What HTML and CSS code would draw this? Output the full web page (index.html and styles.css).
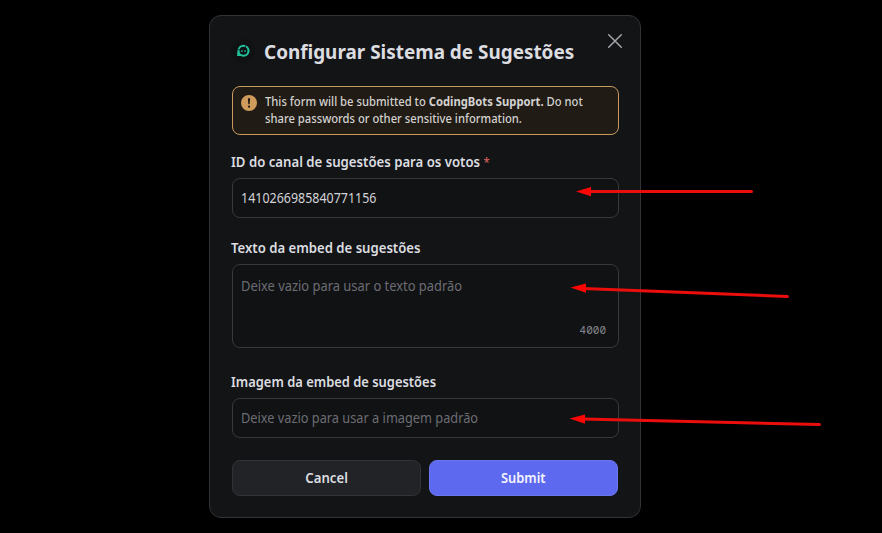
FILE: index.html
```html
<!DOCTYPE html>
<html lang="pt-BR">
<head>
<meta charset="utf-8">
<title>Configurar Sistema de Sugestões</title>
<link rel="stylesheet" href="styles.css">
</head>
<body>
<main class="modal">
  <header class="header">
    <svg class="logo" viewBox="0 0 24 24" width="24" height="24">
      <circle cx="12" cy="12" r="12" fill="#101113"/>
      <circle cx="12.500" cy="11.800" r="5" fill="none" stroke="#1fc39c" stroke-width="2.100"/>
      <path d="M6.200 17.100V12.500l4 4.600z" fill="#1fc39c"/>
      <path d="M15 5.800 14.400 8.500M6.800 10.200 8.800 10.900" stroke="#101113" stroke-width=".8"/>
      <path d="M10.900 11.300v1.800M14.100 11.300v1.800" stroke="#1fc39c" stroke-width="1.300"/>
    </svg>
    <h1 class="title"><span>Configurar Sistema de Sugestões</span></h1>
    <svg class="close" viewBox="0 0 16 16" width="16" height="16"><path d="M1.7 1.7 14.3 14.3M14.3 1.7 1.7 14.3" stroke="#a3a4aa" stroke-width="1.5" stroke-linecap="round"/></svg>
  </header>
  <section class="notice">
    <svg class="warn" viewBox="0 0 16 16" width="16" height="16"><circle cx="8" cy="8" r="8" fill="#cf9c5c"/><path d="M6.9 3.3h2.2L8.7 9.3H7.3z" fill="#201b14"/><circle cx="8" cy="11.7" r="1.1" fill="#201b14"/></svg>
    <p class="notice-text"><span class="n1">This form will be submitted to <b>CodingBots Support.</b> Do not</span><br><span class="n2">share passwords or other sensitive information.</span></p>
  </section>
  <div class="field">
    <div class="label"><span class="l1">ID do canal de sugestões para os votos <span class="required">*</span></span></div>
    <div class="input value"><span class="v1">1410266985840771156</span></div>
  </div>
  <div class="field">
    <div class="label"><span class="l2">Texto da embed de sugestões</span></div>
    <div class="input area"><span class="p1">Deixe vazio para usar o texto padrão</span><span class="count">4000</span></div>
  </div>
  <div class="field">
    <div class="label"><span class="l3">Imagem da embed de sugestões</span></div>
    <div class="input"><span class="p2">Deixe vazio para usar a imagem padrão</span></div>
  </div>
  <footer class="actions">
    <button class="button"><span>Cancel</span></button>
    <button class="button primary"><span>Submit</span></button>
  </footer>
</main>
<svg class="arrows" viewBox="0 0 882 533" width="882" height="533">
  <g stroke="#ec0e0c" stroke-width="3" stroke-linecap="round">
    <path d="M588 191.5H751.5"/><path d="M583 288.5 787.5 296.5"/><path d="M583 419 819.5 424.5"/>
  </g>
  <g fill="#fb0505"><path d="M576 191.5 591 187v9.200z"/><path d="M570.500 287.500 586 283.500v9.300z"/><path d="M569.500 418.500 585 414.500v9.300z"/></g>
</svg>
</body>
</html>
```
FILE: styles.css
```css
* { box-sizing: border-box; }
body {
  margin: 0;
  height: 533px;
  overflow: hidden;
  background: #000;
  padding: 15px 0 0 209px;
  font-family: "Noto Sans", sans-serif;
  color: #dcdde0;
}
.modal {
  width: 432px;
  height: 503px;
  padding: 22px 21px 0 22px;
  border: 1px solid #323337;
  border-radius: 12px;
  background: #131416;
}
.header { display: flex; height: 48px; }
.logo { margin-top: 1px; margin-left: -1px; flex: none; }
.title {
  flex: none;
  margin: 0 0 0 9px;
  width: 336px;
  font-size: 20px;
  line-height: 27px;
  font-weight: 700;
  white-space: nowrap;
}
.close { margin: -5px 0 0 7px; flex: none; }

/* condensed text runs */
.title span, .n1, .n2, .l1, .l2, .l3, .v1, .p1, .p2, .button span {
  display: inline-block;
  transform-origin: left center;
}
.title span { transform: scaleX(.945); }
.n1 { transform: scaleX(.937); }
.n2 { transform: scaleX(.936); }
.l1 { transform: scaleX(.941); }
.l2 { transform: scaleX(.938); }
.l3 { transform: scaleX(.923); }
.v1 { transform: scaleX(.89); }
.p1 { transform: scaleX(.921); }
.p2 { transform: scaleX(.912); }
.button span { transform: scaleX(.94); transform-origin: center; }
.primary span { transform: scaleX(.92); }

.notice {
  display: flex;
  width: 387px;
  height: 49px;
  padding: 7px 8px;
  border: 1px solid #c79a5e;
  border-radius: 8px;
  background: #201b14;
}
.warn { flex: none; margin-top: 1px; }
.notice-text { margin: -1px 0 0 8px; font-size: 12px; line-height: 17px; font-weight: 500; white-space: nowrap; color: #d3d2d1; }
.notice-text b { font-weight: 700; }
.field { padding-top: 18px; }
.field + .field { padding-top: 21px; }
.field:nth-of-type(3) { padding-top: 25px; }
.label { height: 25px; margin-left: -1px; font-size: 14px; line-height: 18px; font-weight: 600; white-space: nowrap; }
.required { color: #d5605f; font-size: 12px; font-weight: 500; }
.input {
  display: flex;
  width: 387px;
  height: 40px;
  padding: 0 8px;
  border: 1px solid #38393d;
  border-radius: 8px;
  background: #111214;
  font-size: 14px;
  line-height: 38px;
  color: #6c6d73;
  white-space: nowrap;
}
.value { color: #d3d4d7; }
.area { height: 84px; justify-content: space-between; line-height: 42px; }
.p1 { height: 42px; }
.count { align-self: flex-end; margin: 0 4px 9px 0; font: 11px/16px "Noto Sans Mono", "DejaVu Sans Mono", monospace; color: #85868b; }
.actions { display: flex; gap: 8px; margin-top: 22px; width: 386px; }
.button {
  flex: 1;
  height: 36px;
  padding: 0 0 1px;
  border: 1px solid #323337;
  border-radius: 8px;
  background: #222327;
  color: #dcdde0;
  font: 600 14px "Noto Sans", sans-serif;
}
.primary { background: #5d69ee; border-color: #6c77ef; color: #f5f5ff; }
.arrows { position: absolute; left: 0; top: 0; }
```
